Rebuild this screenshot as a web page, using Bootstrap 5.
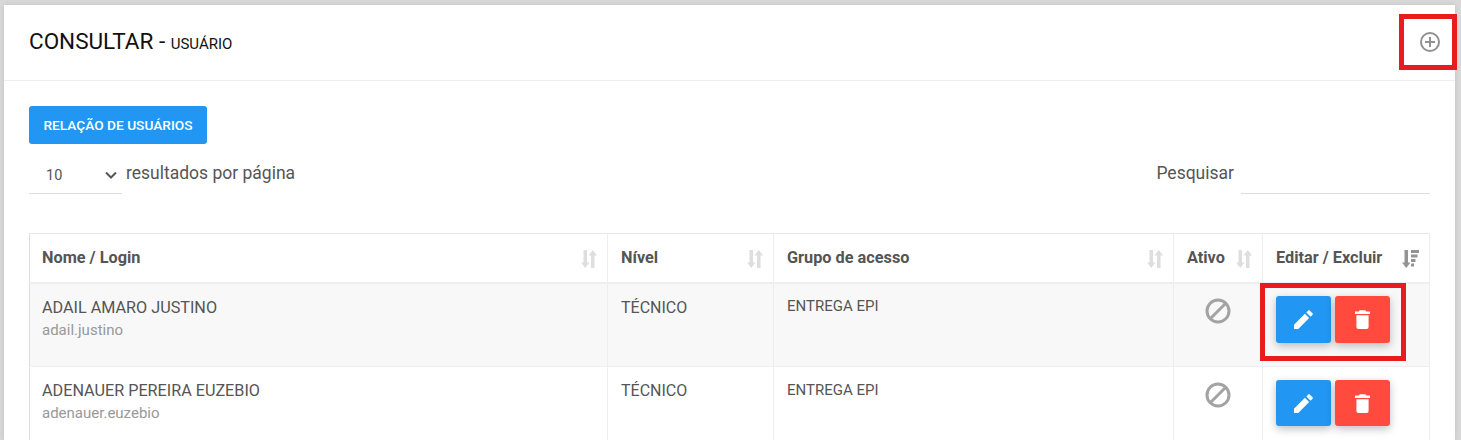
<!DOCTYPE html>
<html lang="pt-BR">
<head>
    <meta charset="UTF-8">
    <meta name="viewport" content="width=device-width, initial-scale=1.0">
    <title>Consultar - Usuário</title>
    <link rel="stylesheet" href="https://cdn.jsdelivr.net/npm/bootstrap@5.3.0/dist/css/bootstrap.min.css">
    <style>
        html, body { height: 440px; overflow: hidden; }
        body { background: #d8d8d8; font-family: Roboto, "Liberation Sans", sans-serif; font-size: 14px; color: #555; position: relative; }
        .painel { position: absolute; inset: 5px 6px 0 4px; background: #fff; box-shadow: 0 0 5px rgba(0,0,0,.1); overflow: hidden; }
        .painel-topo { height: 76px; padding: 0 15px 3px 25px; border-bottom: 1px solid #eee; }
        .painel-topo h1 { font-size: 22.5px; font-weight: 400; color: #111; margin: 0; line-height: 1; }
        .painel-topo h1 span { font-size: 15px; }
        .icone-mais { margin-top: 2px; }
        .painel-corpo { padding: 25px 25px 0; }
        .btn-relacao { background: #2196f3; color: #fff; border: 0; border-radius: 3px; height: 38px; width: 178px; font-size: 13.7px; font-weight: 500; padding: 0; }
        .linha-filtros { height: 50px; margin-bottom: 39px; font-size: 17.5px; color: #555; }
        .texto-filtro { margin-top: 16px; }
        .caixa-select { width: 93px; height: 39px; margin-top: 11px; border-bottom: 1px solid #ddd; padding: 6px 5px 0 17px; font-size: 14.5px; margin-right: 4px; }
        .seta-select { margin-top: 10px; }
        .caixa-busca { width: 189px; height: 39px; margin-top: 11px; border-bottom: 1px solid #ddd; margin-left: 7px; }
        .grade { width: 1400px; table-layout: fixed; border-collapse: collapse; margin: 0; }
        .grade th, .grade td { border: 1px solid #eee; padding: 12px 13px; vertical-align: top; font-weight: 400; color: #555; background: transparent; box-shadow: none; }
        .grade th { height: 49px; font-weight: 700; font-size: 16.3px; padding: 14px 10px 0 13px; line-height: 20px; border-top-color: #e8e8e8; border-bottom-width: 2px; }
        .grade td { height: 84px; font-size: 15px; line-height: 20px; }
        .grade tr > *:first-child { border-left-color: #ddd; padding-left: 12px; }
        .linha-par td { background: #f8f8f8; }
        .nome-usuario { font-size: 16.2px; line-height: 22px; padding-top: 1px; }
        .login-usuario { color: #999; font-size: 15px; line-height: 22px; }
        .texto-nivel { font-size: 16px; line-height: 22px; padding-top: 1px; }
        .icone-ordem { margin-top: 2px; flex-shrink: 0; }
        .icone-ativo { margin-top: 2px; }
        .btn-acao { width: 55px; height: 47px; border: 0; border-radius: 3px; padding: 0; box-shadow: 0 3px 8px rgba(0,0,0,.25); }
        .btn-azul { background: #2196f3; }
        .btn-vermelho { background: #ff4a3d; }
        .grade td.celula-baixa { padding-top: 13px; }
        .celula-baixa .btn-acao { height: 46px; }
        .marca-vermelha { position: absolute; border: 5px solid #e81c1f; pointer-events: none; }
        .marca-mais { left: 1399px; top: 14px; width: 58px; height: 56px; }
        .marca-acoes { left: 1260px; top: 283px; width: 146px; height: 78px; }
    </style>
</head>
<body>
    <div class="painel">
        <div class="painel-topo d-flex align-items-center justify-content-between">
            <h1>CONSULTAR - <span>USUÁRIO</span></h1>
            <svg class="icone-mais" width="20" height="20" viewBox="0 0 20 20" fill="none" stroke="#919191" stroke-width="2"><circle cx="10" cy="10" r="9"/><path d="M10 5v10M5 10h10"/></svg>
        </div>
        <div class="painel-corpo">
            <button class="btn-relacao d-block">RELAÇÃO DE USUÁRIOS</button>
            <div class="linha-filtros d-flex align-items-start justify-content-between">
                <div class="d-flex">
                    <div class="caixa-select d-flex justify-content-between align-items-start">
                        <span class="pt-1">10</span>
                        <svg class="seta-select" width="12" height="8" viewBox="0 0 12 8" fill="none" stroke="#555" stroke-width="2"><path d="M1 1.500l5 5 5-5"/></svg>
                    </div>
                    <span class="texto-filtro">resultados por página</span>
                </div>
                <div class="d-flex">
                    <span class="texto-filtro">Pesquisar</span>
                    <div class="caixa-busca"></div>
                </div>
            </div>
            <table class="table grade">
                <colgroup>
                    <col style="width:578px"><col style="width:166px"><col style="width:400px"><col style="width:89px"><col style="width:167px">
                </colgroup>
                <thead>
                    <tr>
                        <th><div class="d-flex justify-content-between">Nome / Login <svg class="icone-ordem" width="16" height="18" viewBox="0 0 16 18" fill="#dedede"><path d="M2.500 0h3.500v12.500h2.500L4.250 18 0 12.500h2.500zM16 5.500h-2.500V18H10V5.500H7.500L11.750 0z"/></svg></div></th>
                        <th><div class="d-flex justify-content-between">Nível <svg class="icone-ordem" width="16" height="18" viewBox="0 0 16 18" fill="#dedede"><path d="M2.500 0h3.500v12.500h2.500L4.250 18 0 12.500h2.500zM16 5.500h-2.500V18H10V5.500H7.500L11.750 0z"/></svg></div></th>
                        <th><div class="d-flex justify-content-between">Grupo de acesso <svg class="icone-ordem" width="16" height="18" viewBox="0 0 16 18" fill="#dedede"><path d="M2.500 0h3.500v12.500h2.500L4.250 18 0 12.500h2.500zM16 5.500h-2.500V18H10V5.500H7.500L11.750 0z"/></svg></div></th>
                        <th><div class="d-flex justify-content-between">Ativo <svg class="icone-ordem" width="16" height="18" viewBox="0 0 16 18" fill="#dedede"><path d="M2.500 0h3.500v12.500h2.500L4.250 18 0 12.500h2.500zM16 5.500h-2.500V18H10V5.500H7.500L11.750 0z"/></svg></div></th>
                        <th><div class="d-flex justify-content-between">Editar / Excluir <svg class="icone-ordem" width="17" height="18" viewBox="0 0 17 18" fill="#949494"><path d="M2.500 0h3.500v12.500h2.500L4.250 18 0 12.500h2.500zM9 0h8v3H9zM9 4.500h6.500v3H9zM9 9h4.500v3H9zM9 13.500h3v3H9z"/></svg></div></th>
                    </tr>
                </thead>
                <tbody>
                    <tr class="linha-par">
                        <td><div class="nome-usuario">ADAIL AMARO JUSTINO</div><div class="login-usuario">adail.justino</div></td>
                        <td><div class="texto-nivel">TÉCNICO</div></td>
                        <td>ENTREGA EPI</td>
                        <td class="text-center"><svg class="icone-ativo" width="26" height="26" viewBox="0 0 26 26" fill="none" stroke="#a3a3a3" stroke-width="3"><circle cx="13" cy="13" r="11"/><path d="M5.500 20.500l15-15"/></svg></td>
                        <td><div class="d-flex gap-1">
                            <button class="btn-acao btn-azul"><svg width="19" height="19" viewBox="0 0 20 20" fill="#fff"><path d="M0 20v-4.500L11.500 4 16 8.500 4.500 20zM13 2.500l2-2a1 1 0 0 1 1.500 0l3 3a1 1 0 0 1 0 1.500l-2 2z"/></svg></button>
                            <button class="btn-acao btn-vermelho"><svg width="15" height="19" viewBox="0 0 16 20" fill="#fff"><path d="M5 0h6l1 1.500h4V4H0V1.500h4zM1.500 5.500h13V18a2 2 0 0 1-2 2h-9a2 2 0 0 1-2-2z"/></svg></button>
                        </div></td>
                    </tr>
                    <tr>
                        <td><div class="nome-usuario">ADENAUER PEREIRA EUZEBIO</div><div class="login-usuario">adenauer.euzebio</div></td>
                        <td><div class="texto-nivel">TÉCNICO</div></td>
                        <td class="celula-baixa">ENTREGA EPI</td>
                        <td class="text-center celula-baixa"><svg class="icone-ativo" width="26" height="26" viewBox="0 0 26 26" fill="none" stroke="#a3a3a3" stroke-width="3"><circle cx="13" cy="13" r="11"/><path d="M5.500 20.500l15-15"/></svg></td>
                        <td class="celula-baixa"><div class="d-flex gap-1">
                            <button class="btn-acao btn-azul"><svg width="19" height="19" viewBox="0 0 20 20" fill="#fff"><path d="M0 20v-4.500L11.500 4 16 8.500 4.500 20zM13 2.500l2-2a1 1 0 0 1 1.500 0l3 3a1 1 0 0 1 0 1.500l-2 2z"/></svg></button>
                            <button class="btn-acao btn-vermelho"><svg width="15" height="19" viewBox="0 0 16 20" fill="#fff"><path d="M5 0h6l1 1.500h4V4H0V1.500h4zM1.500 5.500h13V18a2 2 0 0 1-2 2h-9a2 2 0 0 1-2-2z"/></svg></button>
                        </div></td>
                    </tr>
                </tbody>
            </table>
        </div>
    </div>
    <div class="marca-vermelha marca-mais"></div>
    <div class="marca-vermelha marca-acoes"></div>
    <script src="https://cdn.jsdelivr.net/npm/bootstrap@5.3.0/dist/js/bootstrap.bundle.min.js"></script>
</body>
</html>
